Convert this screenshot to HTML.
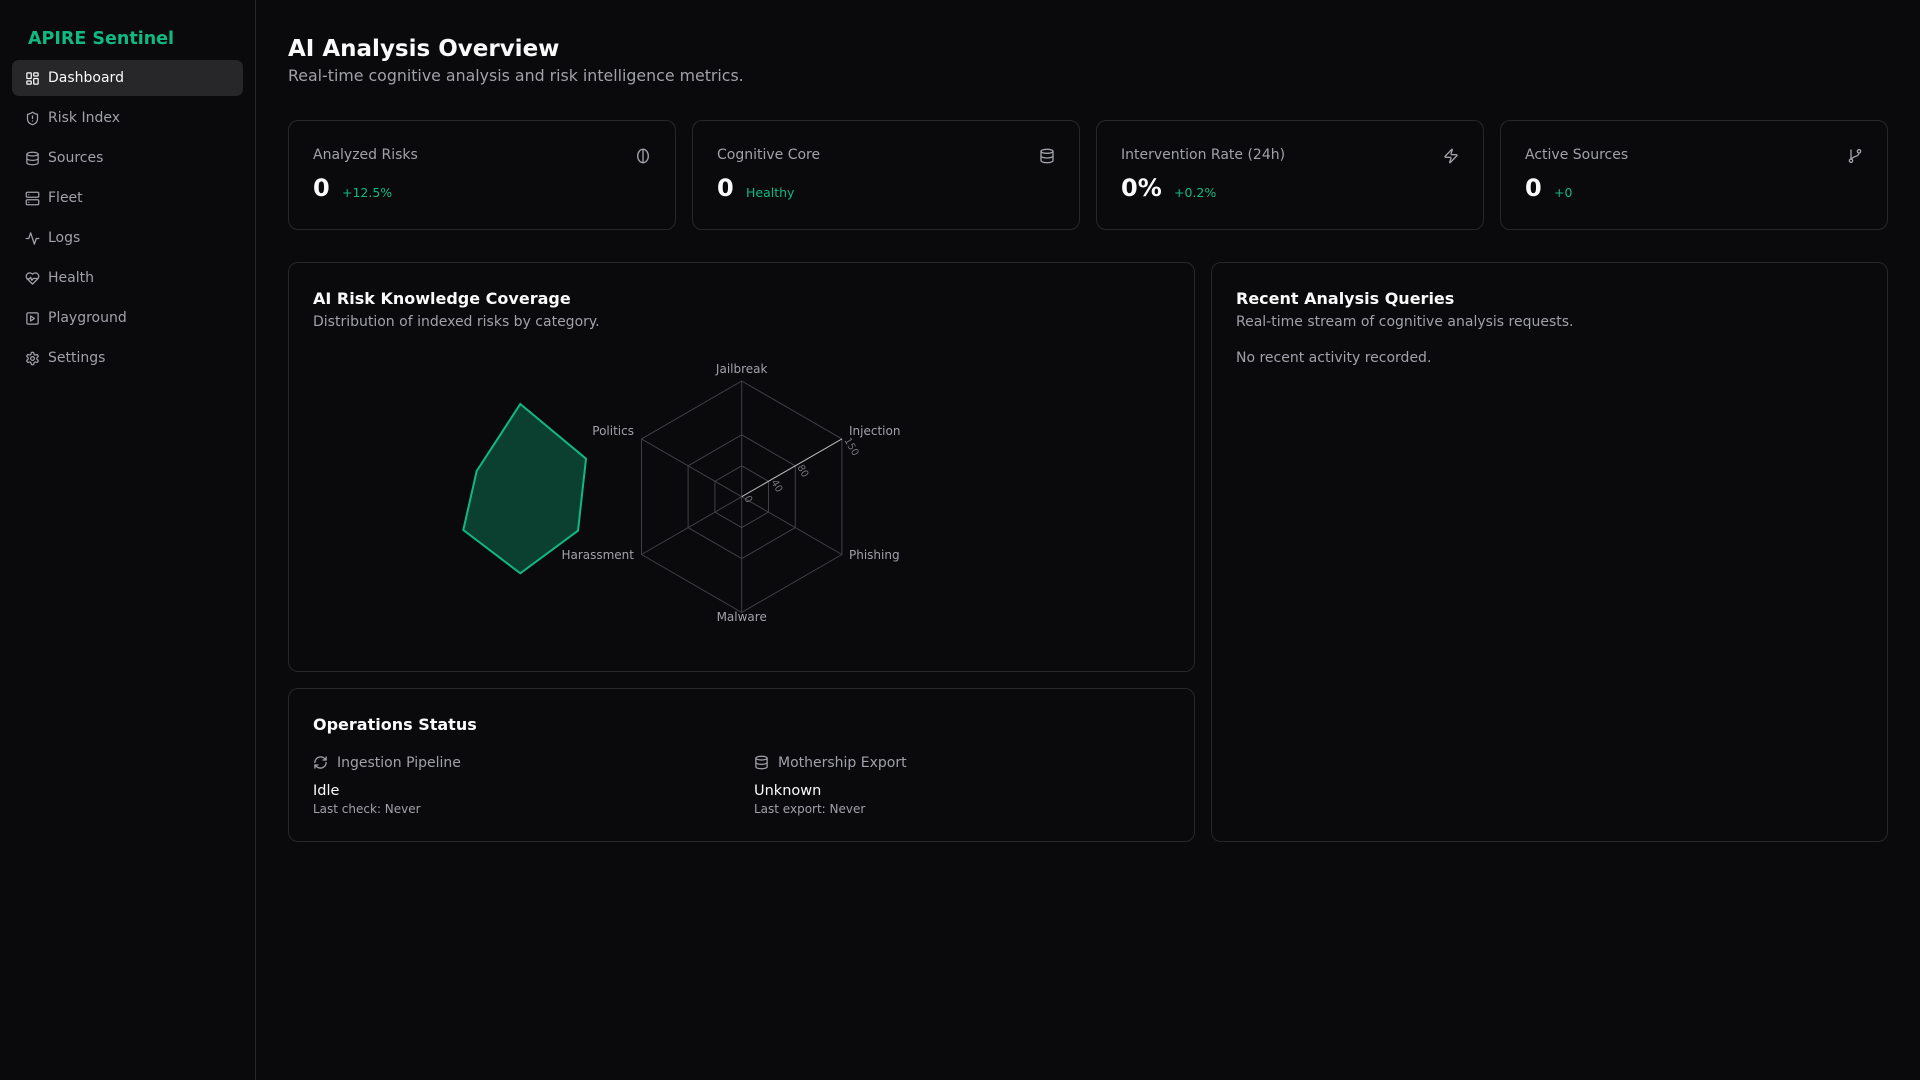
<!DOCTYPE html>
<html><head><meta charset="utf-8"><style>
*{box-sizing:border-box;margin:0;padding:0}
body{width:1920px;height:1080px;background:#0a0a0c;font-family:"DejaVu Sans","Liberation Sans",sans-serif;color:#fafafa;position:relative;overflow:hidden}
.side{position:absolute;left:0;top:0;width:256px;height:1080px;border-right:1px solid #27272a;background:#0a0a0c}
.brand{position:absolute;left:28px;top:29px;font-size:17.5px;font-weight:bold;color:#10b981}
.nav{position:absolute;left:12px;width:231px;height:36px;border-radius:7px;display:flex;align-items:center;padding-left:13px;font-size:14px;color:#a1a1aa}
.nav.act{background:#27272a;color:#fafafa}
.nav svg{width:15px;height:15px;margin-right:8px;flex:none}
svg.i{fill:none;stroke:currentColor;stroke-width:2;stroke-linecap:round;stroke-linejoin:round}
.h1{position:absolute;left:288px;top:36px;font-size:23px;font-weight:bold}
.sub{position:absolute;left:288px;top:66px;font-size:15.8px;color:#a1a1aa}
.card{position:absolute;border:1px solid #27272a;border-radius:10px;background:#0a0a0c}
.stat .lbl{position:absolute;left:24px;top:26px;font-size:14px;color:#a1a1aa}
.stat .val{position:absolute;left:24px;top:53px;font-size:24px;font-weight:bold}
.stat .chg{position:absolute;top:64px;font-size:12.5px;color:#10b981}
.stat svg{position:absolute;right:24px;top:27px;width:16px;height:16px;color:#a1a1aa}
.ct{position:absolute;left:24px;font-size:16px;font-weight:bold}
.cs{position:absolute;left:24px;font-size:14px;color:#a1a1aa}
</style></head><body>
<div class="side">
<div class="brand">APIRE Sentinel</div>
<div class="nav act" style="top:60px"><svg class="i" viewBox="0 0 24 24"><rect x="3" y="3" width="7" height="9" rx="1"/><rect x="14" y="3" width="7" height="5" rx="1"/><rect x="14" y="12" width="7" height="9" rx="1"/><rect x="3" y="16" width="7" height="5" rx="1"/></svg>Dashboard</div>
<div class="nav" style="top:100px"><svg class="i" viewBox="0 0 24 24"><path d="M20 13c0 5-3.5 7.5-7.66 8.95a1 1 0 0 1-.67-.01C7.5 20.5 4 18 4 13V6a1 1 0 0 1 1-1c2 0 4.5-1.2 6.24-2.72a1.17 1.17 0 0 1 1.52 0C14.510 3.81 17 5 19 5a1 1 0 0 1 1 1z"/><path d="M12 8v4M12 16h.01"/></svg>Risk Index</div>
<div class="nav" style="top:140px"><svg class="i" viewBox="0 0 24 24"><ellipse cx="12" cy="5" rx="9" ry="3"/><path d="M3 5v14a9 3 0 0 0 18 0V5"/><path d="M3 12a9 3 0 0 0 18 0"/></svg>Sources</div>
<div class="nav" style="top:180px"><svg class="i" viewBox="0 0 24 24"><rect x="2" y="2" width="20" height="8" rx="2"/><rect x="2" y="14" width="20" height="8" rx="2"/><path d="M6 6h.01M6 18h.01"/></svg>Fleet</div>
<div class="nav" style="top:220px"><svg class="i" viewBox="0 0 24 24"><path d="M22 12h-4l-3 9L9 3l-3 9H2"/></svg>Logs</div>
<div class="nav" style="top:260px"><svg class="i" viewBox="0 0 24 24"><path d="M19 14c1.49-1.46 3-3.21 3-5.5A5.5 5.5 0 0 0 16.5 3c-1.76 0-3 .5-4.5 2-1.5-1.5-2.74-2-4.5-2A5.5 5.5 0 0 0 2 8.5c0 2.3 1.5 4.05 3 5.5l7 7Z"/><path d="M3.2 12.5h4.3l1.5-2.5 2 5 2-3h7.8"/></svg>Health</div>
<div class="nav" style="top:300px"><svg class="i" viewBox="0 0 24 24"><rect x="3" y="3" width="18" height="18" rx="2"/><path d="m9 8 6 4-6 4Z"/></svg>Playground</div>
<div class="nav" style="top:340px"><svg class="i" viewBox="0 0 24 24"><path d="M12.22 2h-.44a2 2 0 0 0-2 2v.18a2 2 0 0 1-1 1.73l-.43.25a2 2 0 0 1-2 0l-.15-.08a2 2 0 0 0-2.73.73l-.22.38a2 2 0 0 0 .73 2.73l.15.1a2 2 0 0 1 1 1.72v.51a2 2 0 0 1-1 1.74l-.15.09a2 2 0 0 0-.73 2.730l.22.38a2 2 0 0 0 2.73.73l.15-.08a2 2 0 0 1 2 0l.43.25a2 2 0 0 1 1 1.73V20a2 2 0 0 0 2 2h.44a2 2 0 0 0 2-2v-.18a2 2 0 0 1 1-1.73l.43-.25a2 2 0 0 1 2 0l.15.08a2 2 0 0 0 2.73-.73l.22-.39a2 2 0 0 0-.73-2.73l-.15-.08a2 2 0 0 1-1-1.74v-.5a2 2 0 0 1 1-1.74l.15-.09a2 2 0 0 0 .73-2.73l-.22-.38a2 2 0 0 0-2.73-.73l-.15.08a2 2 0 0 1-2 0l-.43-.25a2 2 0 0 1-1-1.73V4a2 2 0 0 0-2-2z"/><circle cx="12" cy="12" r="3"/></svg>Settings</div>
</div>

<div class="h1">AI Analysis Overview</div>
<div class="sub">Real-time cognitive analysis and risk intelligence metrics.</div>

<div class="card stat" style="left:288px;top:120px;width:388px;height:110px"><div class="lbl">Analyzed Risks</div><svg class="i" viewBox="0 0 24 24"><ellipse cx="12" cy="12" rx="8" ry="10"/><path d="M12 2v20"/></svg><div class="val">0</div><div class="chg" style="left:53px">+12.5%</div></div>
<div class="card stat" style="left:692px;top:120px;width:388px;height:110px"><div class="lbl">Cognitive Core</div><svg class="i" viewBox="0 0 24 24"><ellipse cx="12" cy="5" rx="9" ry="3"/><path d="M3 5v14a9 3 0 0 0 18 0V5"/><path d="M3 12a9 3 0 0 0 18 0"/></svg><div class="val">0</div><div class="chg" style="left:53px">Healthy</div></div>
<div class="card stat" style="left:1096px;top:120px;width:388px;height:110px"><div class="lbl">Intervention Rate (24h)</div><svg class="i" viewBox="0 0 24 24"><path d="M4 14a1 1 0 0 1-.78-1.63l9.9-10.2a.5.5 0 0 1 .86.46l-1.92 6.02A1 1 0 0 0 13 10h7a1 1 0 0 1 .78 1.63l-9.9 10.2a.5.5 0 0 1-.86-.46l1.92-6.02A1 1 0 0 0 11 14z"/></svg><div class="val">0%</div><div class="chg" style="left:77px">+0.2%</div></div>
<div class="card stat" style="left:1500px;top:120px;width:388px;height:110px"><div class="lbl">Active Sources</div><svg class="i" viewBox="0 0 24 24"><circle cx="6" cy="19" r="2.5"/><circle cx="18" cy="5" r="2.5"/><path d="M6 3v13.5M18 7.5c0 6-9 4-11.5 9.5"/></svg><div class="val">0</div><div class="chg" style="left:53px">+0</div></div>

<div class="card" style="left:288px;top:262px;width:907px;height:410px">
<div class="ct" style="top:26px">AI Risk Knowledge Coverage</div>
<div class="cs" style="top:51px">Distribution of indexed risks by category.</div>
</div>
<svg style="position:absolute;left:0;top:0" width="1920" height="1080">
<g fill="none" stroke="#3f3f46" stroke-width="1">
<polygon points="741.7,381 841.9,438.9 841.9,554.5 741.7,612.4 641.5,554.5 641.5,438.9"/>
<polygon points="741.7,434.8 795.3,465.8 795.3,527.6 741.7,558.6 688.1,527.6 688.1,465.8"/>
<polygon points="741.7,465.8 768.5,481.3 768.5,512.1 741.7,527.6 714.9,512.1 714.9,481.3"/>
<path d="M741.7 496.7V381M741.7 496.7V612.4M741.7 496.7L641.5 438.9M741.7 496.7L641.5 554.5M741.7 496.7L841.9 554.5"/>
</g>
<line x1="741.7" y1="496.7" x2="841.9" y2="438.9" stroke="#bbb" stroke-width="1"/>
<g fill="#71717a" font-size="10" font-family="DejaVu Sans,sans-serif">
<text transform="translate(744,498) rotate(60)">0</text>
<text transform="translate(771,482) rotate(60)">40</text>
<text transform="translate(797,467) rotate(60)">80</text>
<text transform="translate(844,440) rotate(60)">150</text>
</g>
<polygon points="520.3,404 586,458.7 578,530.7 520.3,573.3 463.3,530 476.7,471" fill="#0b3f30" stroke="#10b981" stroke-width="2"/>
<g fill="#a1a1aa" font-size="12" font-family="DejaVu Sans,sans-serif">
<text x="741.7" y="373" text-anchor="middle">Jailbreak</text>
<text x="849" y="435">Injection</text>
<text x="634" y="435" text-anchor="end">Politics</text>
<text x="634" y="559" text-anchor="end">Harassment</text>
<text x="849" y="559">Phishing</text>
<text x="741.7" y="621" text-anchor="middle">Malware</text>
</g>
</svg>

<div class="card" style="left:288px;top:688px;width:907px;height:154px">
<div class="ct" style="top:26px">Operations Status</div>
<svg class="i" viewBox="0 0 24 24" style="position:absolute;left:24px;top:66px;width:15px;height:15px;color:#a1a1aa"><path d="M3 12a9 9 0 0 1 9-9 9.75 9.75 0 0 1 6.74 2.74L21 8"/><path d="M21 3v5h-5"/><path d="M21 12a9 9 0 0 1-9 9 9.75 9.75 0 0 1-6.74-2.74L3 16"/><path d="M8 16H3v5"/></svg>
<div class="cs" style="left:48px;top:66px;font-size:14px">Ingestion Pipeline</div>
<div style="position:absolute;left:24px;top:94px;font-size:14.5px">Idle</div>
<div class="cs" style="top:113px;font-size:12px">Last check: Never</div>
<svg class="i" viewBox="0 0 24 24" style="position:absolute;left:465px;top:66px;width:15px;height:15px;color:#a1a1aa"><ellipse cx="12" cy="5" rx="9" ry="3"/><path d="M3 5v14a9 3 0 0 0 18 0V5"/><path d="M3 12a9 3 0 0 0 18 0"/></svg>
<div class="cs" style="left:489px;top:66px;font-size:14px">Mothership Export</div>
<div style="position:absolute;left:465px;top:94px;font-size:14.5px">Unknown</div>
<div class="cs" style="left:465px;top:113px;font-size:12px">Last export: Never</div>
</div>

<div class="card" style="left:1211px;top:262px;width:677px;height:580px">
<div class="ct" style="top:26px">Recent Analysis Queries</div>
<div class="cs" style="top:51px">Real-time stream of cognitive analysis requests.</div>
<div class="cs" style="top:87px">No recent activity recorded.</div>
</div>
</body></html>
